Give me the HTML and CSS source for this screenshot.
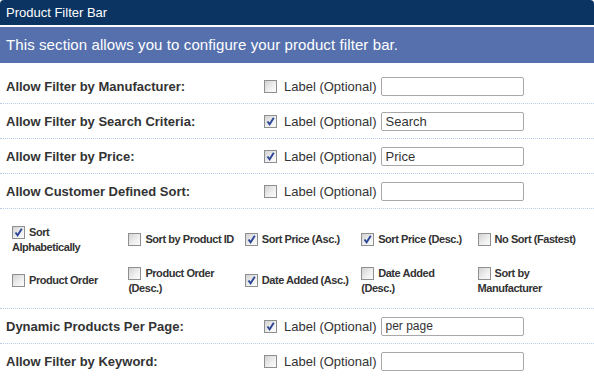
FILE: index.html
```html
<!DOCTYPE html>
<html lang="en">
<head>
  <meta charset="UTF-8">
  <title>Product Filter Bar</title>
  <link rel="stylesheet" href="styles.css">
</head>
<body>

<div class="panel">
  <div class="panel-head">Product Filter Bar</div>
  <div class="panel-intro">This section allows you to configure your product filter bar.</div>

  <div class="opts">
    <div class="opt-row">
      <div class="opt-name">Allow Filter by Manufacturer:</div>
      <div class="opt-ctrl">
        <span class="cb"></span>
        <span class="lbl">Label (Optional)</span>
        <input type="text" class="txt" value="">
      </div>
    </div>

    <div class="opt-row">
      <div class="opt-name">Allow Filter by Search Criteria:</div>
      <div class="opt-ctrl">
        <span class="cb"><svg viewBox="0 0 11 11"><path d="M2.5 5.5 L4.6 8.3 L8.8 1.8"/></svg></span>
        <span class="lbl">Label (Optional)</span>
        <input type="text" class="txt" value="Search">
      </div>
    </div>

    <div class="opt-row">
      <div class="opt-name">Allow Filter by Price:</div>
      <div class="opt-ctrl">
        <span class="cb"><svg viewBox="0 0 11 11"><path d="M2.5 5.5 L4.6 8.3 L8.8 1.8"/></svg></span>
        <span class="lbl">Label (Optional)</span>
        <input type="text" class="txt" value="Price">
      </div>
    </div>

    <div class="opt-row">
      <div class="opt-name">Allow Customer Defined Sort:</div>
      <div class="opt-ctrl">
        <span class="cb"></span>
        <span class="lbl">Label (Optional)</span>
        <input type="text" class="txt" value="">
      </div>
    </div>

    <div class="sort-grid">
      <div class="sort-item"><span class="cb"><svg viewBox="0 0 11 11"><path d="M2.5 5.5 L4.6 8.3 L8.8 1.8"/></svg></span>Sort Alphabetically</div>
      <div class="sort-item"><span class="cb"></span>Sort by Product ID</div>
      <div class="sort-item"><span class="cb"><svg viewBox="0 0 11 11"><path d="M2.5 5.5 L4.6 8.3 L8.8 1.8"/></svg></span>Sort Price (Asc.)</div>
      <div class="sort-item"><span class="cb"><svg viewBox="0 0 11 11"><path d="M2.5 5.5 L4.6 8.3 L8.8 1.8"/></svg></span>Sort Price (Desc.)</div>
      <div class="sort-item"><span class="cb"></span>No Sort (Fastest)</div>
      <div class="sort-item"><span class="cb"></span>Product Order</div>
      <div class="sort-item"><span class="cb"></span>Product Order (Desc.)</div>
      <div class="sort-item"><span class="cb"><svg viewBox="0 0 11 11"><path d="M2.5 5.5 L4.6 8.3 L8.8 1.8"/></svg></span>Date Added (Asc.)</div>
      <div class="sort-item"><span class="cb"></span>Date Added (Desc.)</div>
      <div class="sort-item"><span class="cb"></span>Sort by Manufacturer</div>
    </div>

    <div class="opt-row">
      <div class="opt-name">Dynamic Products Per Page:</div>
      <div class="opt-ctrl">
        <span class="cb"><svg viewBox="0 0 11 11"><path d="M2.5 5.5 L4.6 8.3 L8.8 1.8"/></svg></span>
        <span class="lbl">Label (Optional)</span>
        <input type="text" class="txt small" value="per page">
      </div>
    </div>

    <div class="opt-row">
      <div class="opt-name">Allow Filter by Keyword:</div>
      <div class="opt-ctrl">
        <span class="cb"></span>
        <span class="lbl">Label (Optional)</span>
        <input type="text" class="txt" value="">
      </div>
    </div>
  </div>
</div>

</body>
</html>
```

FILE: styles.css
```css
body {
  margin: 0;
  font-family: Arial, "Liberation Sans", sans-serif;
  background-color: #fff;
  color: #333;
}

.panel-head {
  background-color: #0b3463;
  color: #fff;
  font-size: 13px;
  height: 25px;
  line-height: 25px;
  padding-left: 6px;
  border-radius: 4px 4px 0 0;
  border-bottom: 2px solid #fff;
}

.panel-intro {
  background-color: #5570ad;
  color: #fff;
  font-size: 15px;
  letter-spacing: 0.1px;
  height: 36px;
  line-height: 36px;
  padding-left: 6px;
}

.opts {
  padding-top: 6px;
}

.opt-row {
  display: flex;
  align-items: center;
  height: 34px;
  border-bottom: 1px dotted #b8cde6;
}

.opt-name {
  width: 258px;
  padding-left: 6px;
  font-size: 13px;
  font-weight: bold;
}

.opt-ctrl {
  display: flex;
  align-items: center;
  font-size: 13px;
}

.cb {
  display: inline-block;
  width: 11px;
  height: 11px;
  border: 1px solid #8e8f8f;
  background: linear-gradient(135deg, #d2d2d2 0%, #f0f0f0 60%, #fbfbfb 100%);
}

.cb svg {
  display: block;
  width: 11px;
  height: 11px;
  fill: none;
  stroke: #2b4696;
  stroke-width: 1.9;
}

.lbl {
  margin-left: 7px;
}

.txt {
  margin-left: 4px;
  width: 143px;
  height: 19px;
  box-sizing: border-box;
  border: 1px solid #a8a8a8;
  border-radius: 2px;
  padding: 0 4px;
  font-family: Arial, "Liberation Sans", sans-serif;
  font-size: 13px;
  color: #333;
}

.txt.small {
  font-size: 12px;
}

.sort-grid {
  display: grid;
  grid-template-columns: repeat(5, 1fr);
  grid-auto-rows: 41px;
  align-items: center;
  padding: 10px 0 7px 12px;
  border-bottom: 1px dotted #b8cde6;
  font-size: 11px;
  font-weight: bold;
  letter-spacing: -0.45px;
  line-height: 15px;
}

.sort-item {
  padding-right: 10px;
}

.sort-item .cb {
  vertical-align: -3px;
  margin-right: 4px;
}
```
